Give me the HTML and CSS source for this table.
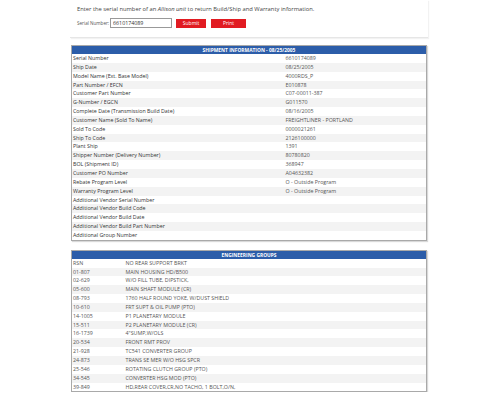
FILE: index.html
```html
<!DOCTYPE html>
<html>
<head>
<meta charset="utf-8">
<link rel="stylesheet" href="styles.css">
</head>
<body>
<div class="page">
  <div class="lookup">
    <p class="intro">Enter the serial number of an <em>Allison unit</em> to return Build/Ship and Warranty information.</p>
    <div class="form-row">
      <label class="lbl">Serial Number:</label>
      <input class="serial" type="text" value="6610174089">
      <button class="btn btn-submit">Submit</button>
      <button class="btn btn-print">Print</button>
    </div>
  </div>

  <table class="grid ship">
    <colgroup><col class="col-k"><col></colgroup>
    <thead><tr><th colspan="2">SHIPMENT INFORMATION - 08/25/2005</th></tr></thead>
    <tbody>
      <tr><td class="k">Serial Number</td><td class="v">6610174089</td></tr>
      <tr><td class="k">Ship Date</td><td class="v">08/25/2005</td></tr>
      <tr><td class="k">Model Name (Ext. Base Model)</td><td class="v">4000RDS_P</td></tr>
      <tr><td class="k">Part Number / EFCN</td><td class="v">E010878</td></tr>
      <tr><td class="k">Customer Part Number</td><td class="v">C07-00011-387</td></tr>
      <tr><td class="k">G-Number / EGCN</td><td class="v">G011570</td></tr>
      <tr><td class="k">Complete Date (Transmission Build Date)</td><td class="v">08/16/2005</td></tr>
      <tr><td class="k">Customer Name (Sold To Name)</td><td class="v">FREIGHTLINER - PORTLAND</td></tr>
      <tr><td class="k">Sold To Code</td><td class="v">0000021261</td></tr>
      <tr><td class="k">Ship To Code</td><td class="v">2126100000</td></tr>
      <tr><td class="k">Plant Ship</td><td class="v">1391</td></tr>
      <tr><td class="k">Shipper Number (Delivery Number)</td><td class="v">80780820</td></tr>
      <tr><td class="k">BOL (Shipment ID)</td><td class="v">368947</td></tr>
      <tr><td class="k">Customer PO Number</td><td class="v">A04632382</td></tr>
      <tr><td class="k">Rebate Program Level</td><td class="v">O - Outside Program</td></tr>
      <tr><td class="k">Warranty Program Level</td><td class="v">O - Outside Program</td></tr>
      <tr><td class="k">Additional Vendor Serial Number</td><td class="v"></td></tr>
      <tr><td class="k">Additional Vendor Build Code</td><td class="v"></td></tr>
      <tr><td class="k">Additional Vendor Build Date</td><td class="v"></td></tr>
      <tr><td class="k">Additional Vendor Build Part Number</td><td class="v"></td></tr>
      <tr><td class="k">Additional Group Number</td><td class="v"></td></tr>
    </tbody>
  </table>

  <table class="grid eng">
    <colgroup><col class="col-c"><col></colgroup>
    <thead><tr><th colspan="2">ENGINEERING GROUPS</th></tr></thead>
    <tbody>
      <tr><td class="c">RSN</td><td class="d">NO REAR SUPPORT BRKT</td></tr>
      <tr><td class="c">01-807</td><td class="d">MAIN HOUSING HD/B500</td></tr>
      <tr><td class="c">02-629</td><td class="d">W/O FILL TUBE, DIPSTICK,</td></tr>
      <tr><td class="c">05-600</td><td class="d">MAIN SHAFT MODULE (CR)</td></tr>
      <tr><td class="c">08-793</td><td class="d">1760 HALF ROUND YOKE, W/DUST SHIELD</td></tr>
      <tr><td class="c">10-610</td><td class="d">FRT SUPT &amp; OIL PUMP (PTO)</td></tr>
      <tr><td class="c">14-1005</td><td class="d">P1 PLANETARY MODULE</td></tr>
      <tr><td class="c">15-511</td><td class="d">P2 PLANETARY MODULE (CR)</td></tr>
      <tr><td class="c">16-1739</td><td class="d">4"SUMP,W/OLS</td></tr>
      <tr><td class="c">20-534</td><td class="d">FRONT RMT PROV</td></tr>
      <tr><td class="c">21-928</td><td class="d">TC541 CONVERTER GROUP</td></tr>
      <tr><td class="c">24-873</td><td class="d">TRANS SE MER W/O HSG SPCR</td></tr>
      <tr><td class="c">25-546</td><td class="d">ROTATING CLUTCH GROUP (PTO)</td></tr>
      <tr><td class="c">34-545</td><td class="d">CONVERTER HSG MOD (PTO)</td></tr>
      <tr><td class="c">39-849</td><td class="d">HD,REAR COVER,CR,NO TACHO, 1 BOLT,O/N,</td></tr>
    </tbody>
  </table>
</div>
</body>
</html>
```
FILE: styles.css
```css
html, body {
  margin: 0;
  padding: 0;
  background: #ffffff;
}
body {
  font-family: "Open Sans", "Noto Sans", sans-serif;
  font-size: 5.3px;
  color: #333;
}
.page {
  width: 358px;
  margin-left: 70px;
}
.lookup {
  padding: 5px 7px 9px;
  border-bottom: 1px solid #e6e6e6;
  box-shadow: 1px 1px 1px rgba(0,0,0,0.05);
}
.intro {
  margin: 0;
  height: 8px;
  line-height: 8px;
  font-size: 5.8px;
  color: #444;
}
.intro em { font-style: italic; }
.form-row {
  display: flex;
  align-items: center;
  margin-top: 5px;
  height: 10px;
}
.lbl {
  font-size: 4.6px;
  color: #555;
  margin-right: 1px;
}
.serial {
  box-sizing: border-box;
  width: 62px;
  height: 10px;
  padding: 0 2px;
  border: 1px solid #999;
  font-family: inherit;
  font-size: 5.3px;
  color: #333;
  margin: 0 4px 0 0;
}
.btn {
  box-sizing: border-box;
  height: 9px;
  border: 0;
  padding: 0;
  background: #e11b22;
  color: #fff;
  font-family: inherit;
  font-size: 5px;
  margin: 0;
}
.btn-submit { width: 30px; margin-right: 5px; }
.btn-print { width: 35px; }

.grid {
  width: 356px;
  margin-left: 1px;
  border-collapse: collapse;
  border: 1px solid #a9a9a9;
  box-shadow: 1px 1px 1px rgba(0,0,0,0.15);
  table-layout: fixed;
}
.col-k { width: 213px; }
.col-c { width: 53px; }
.ship { margin-top: 7px; }
.eng { margin-top: 9px; }
.grid th {
  background: #2c5da9;
  color: #fff;
  font-weight: 700;
  font-size: 4.9px;
  height: 8px;
  padding: 0;
  line-height: 8px;
  text-align: center;
}
.grid td {
  height: 8.85px;
  padding: 0 0 0 1px;
  line-height: 8.85px;
  white-space: nowrap;
  overflow: hidden;
}
.grid tbody tr:nth-child(even) td { background: #f3f3f3; }
.ship .k { color: #333; }
.ship .v { color: #555; }
.eng .c { color: #555; }
.eng .d { color: #555; }
```
